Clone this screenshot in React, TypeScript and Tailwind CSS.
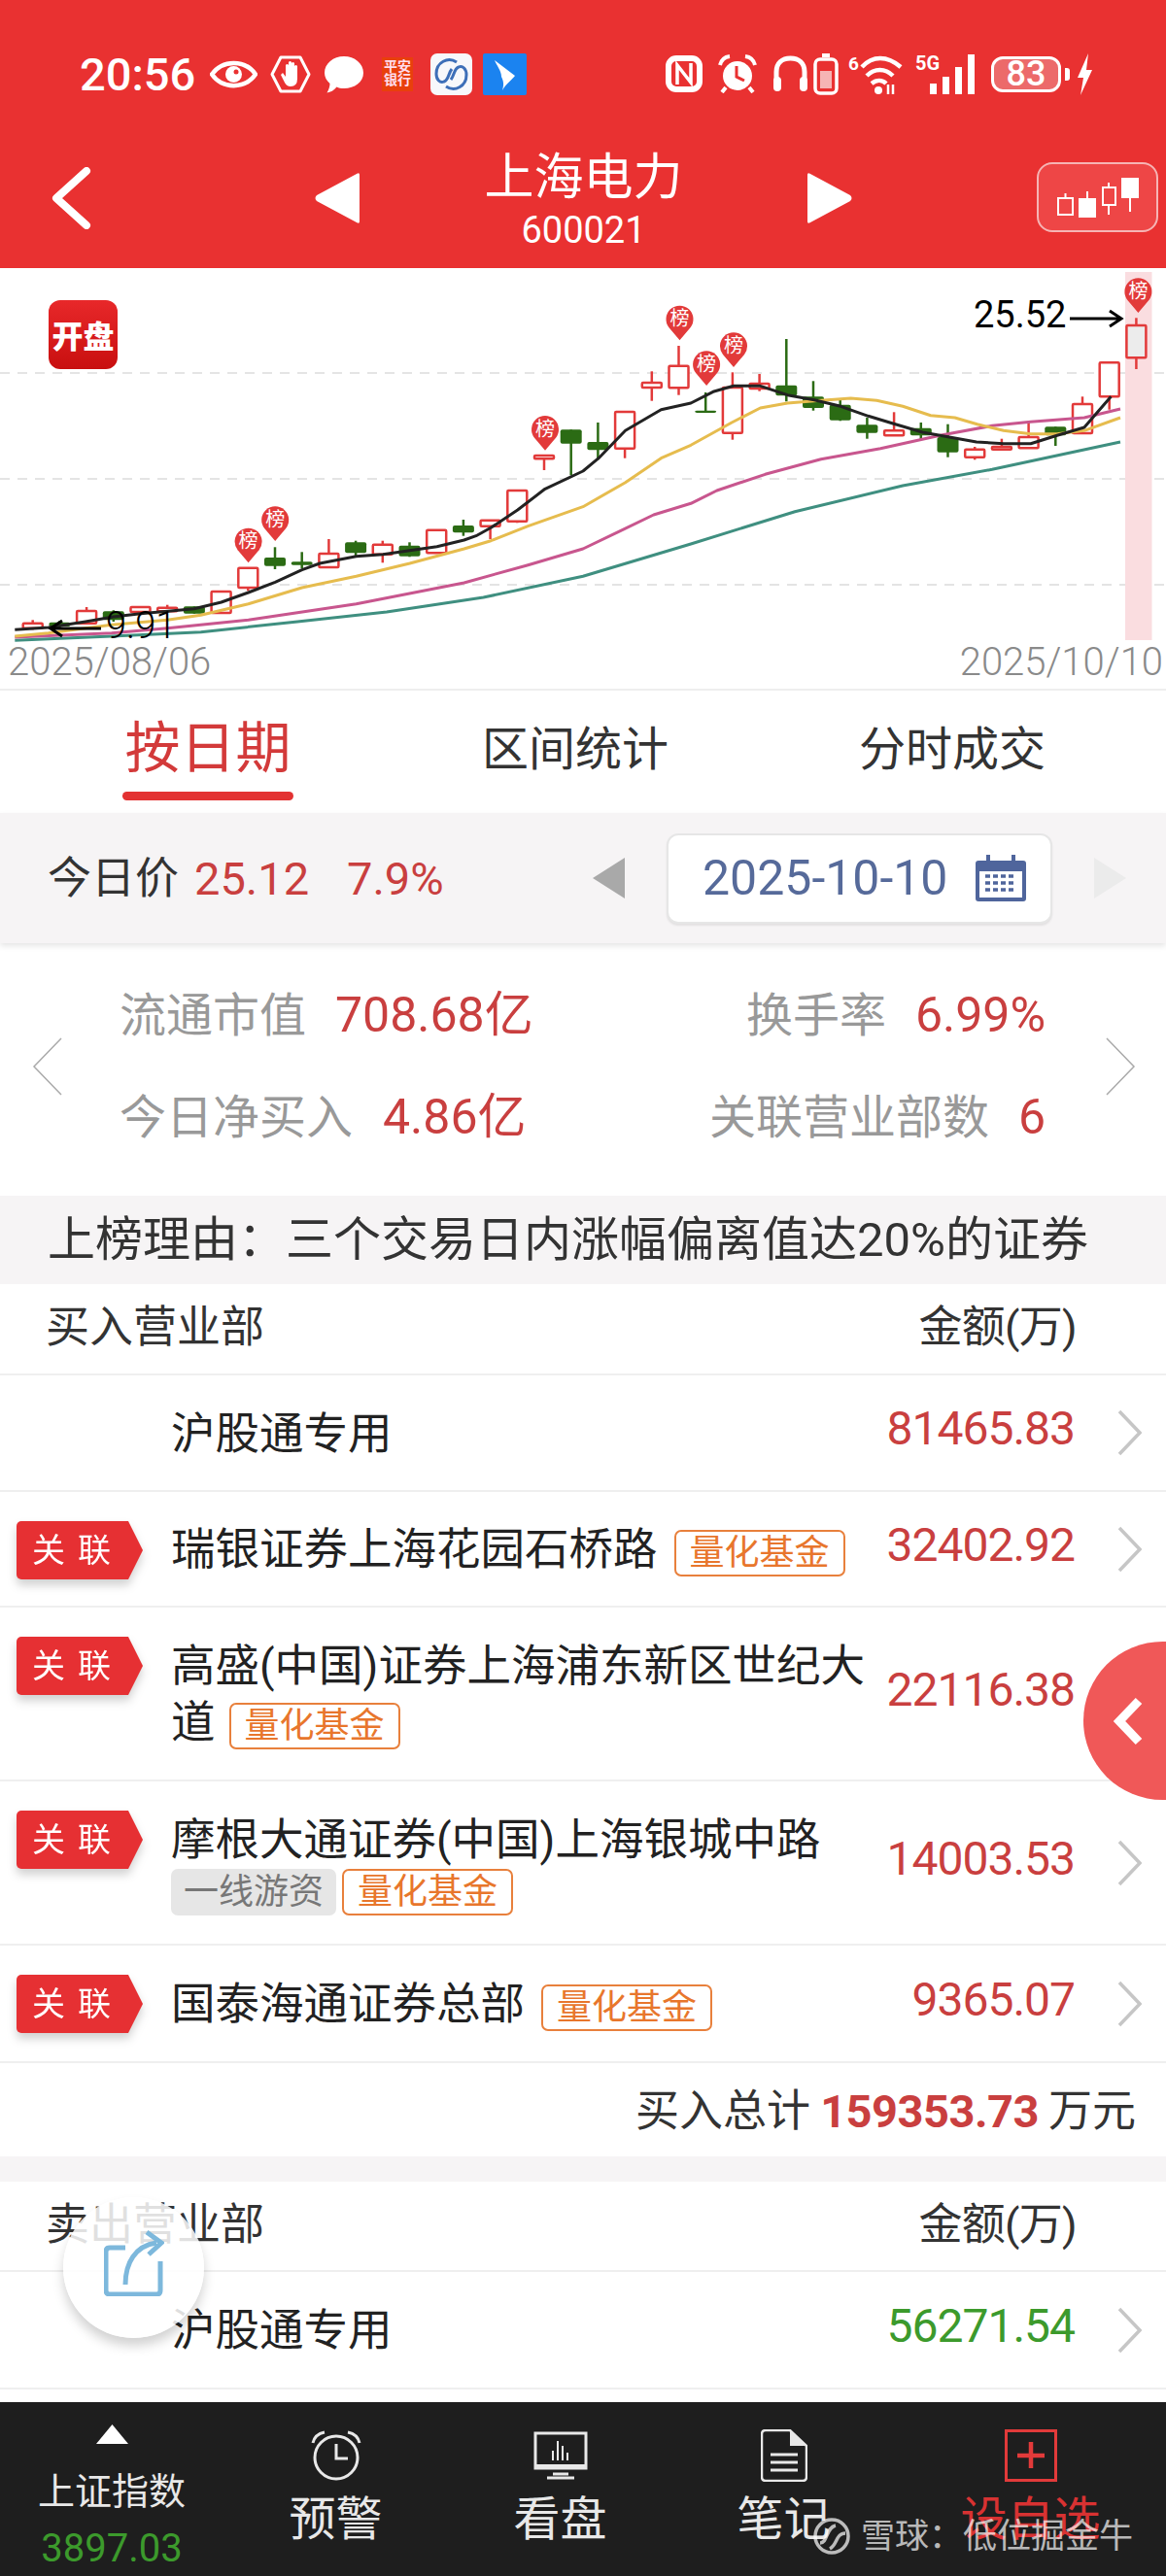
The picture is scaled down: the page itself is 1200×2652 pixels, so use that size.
import React from "react";

const X2 = (x: number) => +(x / 2.613).toFixed(1);
const X3 = (x: number) => +(600 + x / 2.613).toFixed(1);
const Y = (y: number) => +(280 + y / 3).toFixed(1);
const line = (a: number[][], b: number[][]) =>
  [...a.map(([x, y]) => `${X2(x)},${Y(y)}`), ...b.map(([x, y]) => `${X3(x)},${Y(y)}`)].join(" ");

const candles: [number, number, number, number, number][] = [
  [1, 1075, 1085, 1100, 1105], [0, 1078, 1082, 1095, 1100], [1, 1035, 1047, 1085, 1088], [0, 1045, 1048, 1075, 1080],
  [1, 1033, 1035, 1050, 1060], [1, 1028, 1037, 1048, 1052], [0, 1033, 1033, 1055, 1055], [1, 985, 987, 1053, 1055],
  [1, 912, 914, 975, 985], [0, 850, 882, 908, 918], [0, 865, 895, 905, 915], [1, 825, 870, 912, 915],
  [0, 830, 835, 868, 880], [1, 830, 842, 872, 898], [0, 835, 845, 878, 880], [1, 795, 797, 868, 870],
  [0, 765, 783, 805, 815], [1, 765, 767, 785, 825], [1, 675, 675, 770, 775], [1, 567, 567, 577, 612],
  [0, 487, 487, 530, 628], [0, 465, 525, 550, 580], [1, 430, 432, 545, 575], [1, 307, 342, 357, 398],
  [1, 228, 290, 358, 380], [0, 372, 428, 435, 435], [1, 310, 357, 497, 518], [1, 315, 345, 360, 368],
  [0, 207, 350, 382, 400], [0, 337, 385, 420, 428], [0, 395, 410, 458, 460], [0, 450, 472, 497, 515],
  [1, 433, 490, 505, 505], [0, 465, 482, 505, 518], [0, 470, 510, 557, 572], [1, 540, 548, 572, 580],
  [1, 515, 540, 548, 548], [1, 462, 510, 544, 545], [0, 478, 478, 505, 537], [1, 385, 408, 498, 498],
  [1, 280, 280, 385, 425], [1, 142, 165, 265, 300],
];

const ma5 = line(
  [[40,1105],[130,1098],[230,1080],[305,1065],[378,1055],[451,1048],[522,1040],[595,1020],[668,990],[740,958],[812,920],[860,900],[958,878],[1030,872],[1102,860],[1175,848],[1248,828],[1280,815],[1320,790],[1392,735],[1466,670]],
  [[0,615],[42,575],[114,490],[210,425],[290,405],[350,370],[405,352],[477,352],[550,380],[622,395],[693,415],[767,445],[840,470],[913,495],[985,510],[1058,525],[1131,530],[1204,530],[1275,505],[1348,480],[1420,385]]
);
const ma10 = line(
  [[40,1125],[130,1115],[300,1090],[450,1075],[540,1060],[668,1025],[812,975],[958,940],[1102,900],[1248,855],[1320,830],[1420,785]],
  [[0,725],[114,650],[210,575],[290,535],[400,465],[477,420],[550,405],[622,398],[720,390],[790,397],[860,415],[935,443],[1000,450],[1060,470],[1131,490],[1204,500],[1275,500],[1348,490],[1445,450]]
);
const ma20 = line(
  [[40,1128],[300,1115],[450,1100],[668,1075],[958,1025],[1248,960],[1420,905]],
  [[0,855],[100,800],[190,750],[290,715],[360,675],[490,625],[640,578],[800,545],[960,505],[1100,475],[1204,463],[1348,450],[1445,423]]
);
const ma30 = line(
  [[40,1138],[300,1125],[540,1112],[800,1080],[1040,1050],[1300,1005]],
  [[0,940],[290,840],[570,740],[860,660],[1100,610],[1445,525]]
);

const pins = [
  [X2(668), Y(832)], [X2(740), Y(765)], [X2(1466), Y(485)],
  [X3(260), Y(145)], [X3(332), Y(285)], [X3(405), Y(228)], [X3(1493), Y(60)],
];

function Chart() {
  return (
    <svg width="1200" height="433" viewBox="0 276 1200 433" className="block">
      <defs>
        <linearGradient id="kp" x1="0" y1="0" x2="0" y2="1">
          <stop offset="0" stopColor="#e8282a" />
          <stop offset="1" stopColor="#c80f0f" />
        </linearGradient>
      </defs>
      {[384, 493, 602].map((y) => (
        <line key={y} x1="0" x2="1200" y1={y} y2={y} stroke="#dcdcdc" strokeWidth="1.5" strokeDasharray="10 8" />
      ))}
      <rect x="1158" y="280" width="27.5" height="379" fill="#fadde0" />
      <rect x="50" y="309" width="71" height="71" rx="12" fill="url(#kp)" />
      <text x="85.5" y="358" textAnchor="middle" fill="#fff" fontSize="32" fontWeight="900">开盘</text>
      {candles.map(([up, wt, bt, bb, wb], i) => {
        const x = 33.7 + 27.7 * i;
        const c = up ? "#e23a3a" : "#2b6b14";
        return (
          <g key={i}>
            <line x1={x} x2={x} y1={Y(wt)} y2={Y(wb)} stroke={c} strokeWidth="2.5" />
            {up ? (
              <rect x={x - 10} y={Y(bt)} width="20" height={Y(bb) - Y(bt)} fill={i === 41 ? "#ececec" : "#fff"} stroke={c} strokeWidth="2.5" rx="1" />
            ) : (
              <rect x={x - 11} y={Y(bt)} width="22" height={Math.max(Y(bb) - Y(bt), 2)} fill={c} rx="2" />
            )}
          </g>
        );
      })}
      <polyline points={ma30} fill="none" stroke="#3f8f80" strokeWidth="3" strokeLinejoin="round" />
      <polyline points={ma20} fill="none" stroke="#c8568e" strokeWidth="3" strokeLinejoin="round" />
      <polyline points={ma10} fill="none" stroke="#e6bc4e" strokeWidth="3" strokeLinejoin="round" />
      <polyline points={ma5} fill="none" stroke="#222" strokeWidth="3" strokeLinejoin="round" />
      {pins.map(([x, y], i) => (
        <g key={i}>
          <path d={`M${x} ${y + 22}L${x - 11} ${y + 9}A14 14 0 1 1 ${x + 11} ${y + 9}Z`} fill="#e23a3a" />
          <text x={x} y={y + 7} textAnchor="middle" fill="#fff" fontSize="20">榜</text>
        </g>
      ))}
      <text x="1002" y="337" fontSize="38" fill="#000">25.52</text>
      <path d="M1101 328H1153M1142 320L1154 328L1142 336" fill="none" stroke="#000" strokeWidth="3" />
      <text x="109" y="657" fontSize="38" fill="#000" fontWeight="300">9.91</text>
      <path d="M104 647H53M64 639L52 647L64 655" fill="none" stroke="#000" strokeWidth="3" />
      <text x="8" y="695" fontSize="40" fill="#8a8a8a" fontWeight="300">2025/08/06</text>
      <text x="1197" y="695" textAnchor="end" fontSize="40" fill="#8a8a8a" fontWeight="300">2025/10/10</text>
    </svg>
  );
}

function StatusBar() {
  return (
    <div className="flex h-[150px] items-center pl-[82px] pt-[2px] text-white">
      <span className="w-[134px] text-[47px] font-medium leading-none">20:56</span>
      <svg width="49" height="29" viewBox="0 0 49 29" className="mr-[13px]">
        <path d="M2 14.5C13 -1 36 -1 47 14.5C36 30 13 30 2 14.5Z" fill="none" stroke="#fff" strokeWidth="4.5" />
        <circle cx="24.5" cy="14.5" r="8.5" fill="#fff" />
        <circle cx="27" cy="12" r="2.5" fill="#e93131" />
      </svg>
      <svg width="42" height="39" viewBox="0 0 42 39" className="mr-[13px]">
        <path d="M11 2H31L40 19.5L31 37H11L2 19.5Z" fill="none" stroke="#fff" strokeWidth="3" strokeLinejoin="round" />
        <path d="M11 20L13 18L16 22V10Q17.5 8 19 10V19V7Q20.5 5 22 7V19V8Q23.5 6 25 8V20V11Q26.5 9 28 11V24Q28 32 21 32Q17 32 15 28Z" fill="#fff" />
      </svg>
      <svg width="42" height="39" viewBox="0 0 42 39" className="mr-[18px]">
        <path d="M21 1C32 1 41 8.5 41 18C41 27.5 32 34 21 34C18 34 15.5 33.5 13.5 32.5C11 36 7 38 3.5 38.5C5.5 35 6.5 32 6.5 29C3 26 1 22 1 18C1 8.5 10 1 21 1Z" fill="#fff" />
      </svg>
      <div className="mr-[18px] flex h-[35px] w-[32px] flex-col items-center justify-start bg-[#e8400c] pt-[2px] text-[14px] font-bold leading-[14px] text-[#fde]">
        <span>平安</span>
        <span>银行</span>
      </div>
      <svg width="43" height="43" viewBox="0 0 43 43" className="mr-[11px]">
        <rect width="43" height="43" rx="7" fill="#f7f8fb" />
        <path d="M27 9C18 3 6 9 6 21C6 27 10 31 14 29C19 27 18 21 22 16" fill="none" stroke="#3d6fb8" strokeWidth="3" />
        <path d="M16 34C25 40 37 34 37 22C37 16 33 12 29 14C24 16 25 22 21 27" fill="none" stroke="#3d6fb8" strokeWidth="3" />
      </svg>
      <svg width="45" height="43" viewBox="0 0 45 43" className="mr-[143px]">
        <rect width="45" height="43" rx="2" fill="#1b83f0" />
        <path d="M12 7L33 23C30 27 24 31 20 38C22 32 21 28 19 24C19 18 14 12 12 7Z" fill="#fff" />
      </svg>
      <svg width="38" height="38" viewBox="0 0 38 38" className="mr-[15px]">
        <rect x="3" y="3" width="32" height="32" rx="8" fill="none" stroke="#fff" strokeWidth="6" />
        <path d="M12 30V10L26 28V8" fill="none" stroke="#fff" strokeWidth="3.5" />
      </svg>
      <svg width="42" height="40" viewBox="0 0 42 40" className="mr-[15px]">
        <circle cx="21" cy="22" r="15" fill="#fff" />
        <path d="M20 12V23L28 27" fill="none" stroke="#e93131" strokeWidth="3" />
        <path d="M3 11Q5 3 13 2M39 11Q37 3 29 2M9 34L5 39M33 34L37 39" fill="none" stroke="#fff" strokeWidth="4" />
      </svg>
      <svg width="37" height="38" viewBox="0 0 37 38" className="mr-[5px]">
        <path d="M4 26V17C4 8 10 3 18.5 3C27 3 33 8 33 17V26" fill="none" stroke="#fff" strokeWidth="5" />
        <rect x="1" y="22" width="8" height="15" rx="4" fill="#fff" />
        <rect x="28" y="22" width="8" height="15" rx="4" fill="#fff" />
      </svg>
      <svg width="26" height="43" viewBox="0 0 26 43" className="mr-[10px]">
        <path d="M9 0H17V4H9Z" fill="#fff" />
        <rect x="2" y="6" width="22" height="35" rx="5" fill="none" stroke="#fff" strokeWidth="3.5" />
        <rect x="7" y="18" width="12" height="18" fill="#f6b4b4" />
      </svg>
      <svg width="56" height="43" viewBox="0 0 56 43" className="mr-[13px]">
        <text x="0" y="17" fontSize="19" fontWeight="700" fill="#fff">6</text>
        <path d="M14 14C25 2 40 2 54 14M19 23C27 15 38 15 46 23M24 31C29 27 35 27 39 31" fill="none" stroke="#fff" strokeWidth="4.5" />
        <circle cx="31" cy="38" r="4" fill="#fff" />
        <path d="M41 32V42M46 32V42" stroke="#fff" strokeWidth="2.5" />
      </svg>
      <svg width="61" height="43" viewBox="0 0 61 43" className="mr-[17px]">
        <text x="0" y="17" fontSize="20" fontWeight="700" fill="#fff">5G</text>
        <rect x="15" y="31" width="7" height="11" fill="#fff" />
        <rect x="28" y="24" width="7" height="18" fill="#fff" />
        <rect x="41" y="14" width="7" height="28" fill="#fff" />
        <rect x="54" y="1" width="7" height="41" fill="#fff" />
      </svg>
      <div className="flex w-[72px] items-center">
        <div className="flex h-[37px] w-full items-center justify-center rounded-[12px] border-[3px] border-white bg-[#ec6a6a] text-[36px] font-medium leading-none text-white">83</div>
      </div>
      <div className="ml-[4px] h-[13px] w-[5px] rounded-r-[3px] bg-white" />
      <svg width="17" height="43" viewBox="0 0 17 43" className="ml-[7px]">
        <path d="M12 0L1 25H7L4 43L16 17H10Z" fill="#fff" />
      </svg>
    </div>
  );
}

function NavBar() {
  return (
    <div className="flex h-[126px] items-start pl-[52px] text-white">
      <svg width="42" height="64" viewBox="0 0 42 64" className="mt-[22px] mr-[229px]">
        <path d="M37 4L6 32L37 60" fill="none" stroke="#fff" strokeWidth="8" strokeLinecap="round" strokeLinejoin="round" />
      </svg>
      <svg width="48" height="54" viewBox="0 0 48 54" className="mt-[27px]">
        <path d="M47 3V51Q47 54 44 52L3 30Q0 27 3 24L44 2Q47 0 47 3Z" fill="#fff" />
      </svg>
      <div className="flex w-[459px] flex-col items-center">
        <span className="mt-[3px] text-[51px] leading-[60px]">上海电力</span>
        <span className="text-[38px] leading-[48px]">600021</span>
      </div>
      <svg width="48" height="54" viewBox="0 0 48 54" className="mt-[27px]">
        <path d="M1 3V51Q1 54 4 52L45 30Q48 27 45 24L4 2Q1 0 1 3Z" fill="#fff" />
      </svg>
      <div className="ml-[189px] mt-[17px] flex h-[72px] w-[125px] items-center justify-center rounded-[16px] border-2 border-[#f6b4b4] bg-[#ee4646]">
        <svg width="84" height="46" viewBox="0 0 84 46" className="mt-[-3px]">
          <path d="M8.5 20V25M31 18V25M53 9V42M75 4V39" stroke="#fff" strokeWidth="2" />
          <rect x="1" y="25" width="15" height="17" fill="#ee4646" stroke="#fff" strokeWidth="2" />
          <rect x="22" y="25" width="18" height="20" fill="#fff" />
          <rect x="47" y="14" width="13" height="18" fill="#ee4646" stroke="#fff" strokeWidth="2" />
          <rect x="66" y="4" width="18" height="21" fill="#fff" />
        </svg>
      </div>
    </div>
  );
}

function Tabs() {
  return (
    <div className="flex h-[128px] items-start border-t-2 border-[#eeeeee] pl-[126px]">
      <div className="flex w-[176px] flex-col items-center pt-[22px]">
        <span className="text-[57px] leading-[76px] text-[#d33a3a]">按日期</span>
        <div className="mt-[6px] h-[9px] w-full rounded-full bg-[#e33232]" />
      </div>
      <span className="ml-[194px] mt-[31px] text-[48px] leading-[60px] text-[#333]">区间统计</span>
      <span className="ml-[196px] mt-[31px] text-[48px] leading-[60px] text-[#333]">分时成交</span>
    </div>
  );
}

function DateBar() {
  return (
    <div className="relative z-10 flex h-[134px] items-center bg-[#f6f4f5] pl-[49px] shadow-[0_3px_6px_rgba(0,0,0,0.1)]">
      <span className="w-[151px] text-[45px] leading-none text-[#333]">今日价</span>
      <span className="w-[157px] text-[47px] leading-none text-[#c93f3f]">25.12</span>
      <span className="w-[253px] text-[47px] leading-none text-[#c93f3f]">7.9%</span>
      <svg width="33" height="42" viewBox="0 0 33 42">
        <path d="M33 0V42L0 21Z" fill="#a9a9a9" />
      </svg>
      <div className="ml-[43px] flex h-[93px] w-[397px] items-center rounded-[12px] border-2 border-[#e6e6e6] bg-white pl-[35px] shadow-[0_2px_2px_rgba(0,0,0,0.08)]">
        <span className="w-[281px] text-[50px] leading-none text-[#566a9a]">2025-10-10</span>
        <svg width="52" height="48" viewBox="0 0 52 48">
          <path d="M3 6H49Q52 6 52 9V45Q52 48 49 48H3Q0 48 0 45V9Q0 6 3 6Z" fill="#4f659c" />
          <rect x="4" y="17" width="44" height="27" fill="#fff" />
          <path d="M13 0V12M39 0V12" stroke="#4f659c" strokeWidth="4" />
          <path d="M10 22H42M10 29H42M10 36H42" stroke="#4f659c" strokeWidth="3.5" strokeDasharray="5 3" />
        </svg>
      </div>
      <svg width="33" height="42" viewBox="0 0 33 42" className="ml-[43px]">
        <path d="M0 0V42L33 21Z" fill="#ebebeb" />
      </svg>
    </div>
  );
}

function Stats() {
  const v = "text-[50px] text-[#c93f3f]";
  return (
    <div className="flex h-[260px] items-center pl-[33px] pr-[31px] pb-[6px]">
      <svg width="31" height="60" viewBox="0 0 31 60" className="shrink-0">
        <path d="M30 1L2 30L30 59" fill="none" stroke="#aaa" strokeWidth="1.5" />
      </svg>
      <div className="flex flex-1 flex-col gap-[44px] pl-[59px] pr-[62px] text-[48px] leading-[60px]">
        <div className="flex justify-between">
          <div>
            <span className="text-[#999]">流通市值</span>
            <span className={`ml-[30px] ${v}`}>708.68亿</span>
          </div>
          <div>
            <span className="text-[#999]">换手率</span>
            <span className={`ml-[30px] ${v}`}>6.99%</span>
          </div>
        </div>
        <div className="flex justify-between">
          <div>
            <span className="text-[#999]">今日净买入</span>
            <span className={`ml-[31px] ${v}`}>4.86亿</span>
          </div>
          <div>
            <span className="text-[#999]">关联营业部数</span>
            <span className={`ml-[30px] ${v}`}>6</span>
          </div>
        </div>
      </div>
      <svg width="31" height="60" viewBox="0 0 31 60" className="shrink-0">
        <path d="M1 1L29 30L1 59" fill="none" stroke="#aaa" strokeWidth="1.5" />
      </svg>
    </div>
  );
}

function Tag() {
  return (
    <div className="ml-[17px] mt-[30px] h-[60px] w-[130px] shrink-0 self-start drop-shadow-[0_6px_5px_rgba(0,0,0,0.18)]">
      <div className="flex h-full items-center rounded-l-[5px] bg-[#e63033] pl-[16px] text-[34px] leading-none tracking-[13px] text-white [clip-path:polygon(0_0,115px_0,130px_50%,115px_100%,0_100%)]">
        关联
      </div>
    </div>
  );
}

function Quant({ className = "" }: { className?: string }) {
  return (
    <span className={`inline-flex h-[48px] w-[176px] items-center justify-center rounded-[7px] border-2 border-[#e8803c] align-middle text-[36px] leading-none text-[#e8762c] ${className}`}>
      量化基金
    </span>
  );
}

function Row({
  h,
  tag,
  amount,
  green,
  children,
}: {
  h: string;
  tag?: boolean;
  amount: string;
  green?: boolean;
  children: React.ReactNode;
}) {
  return (
    <div className={`flex items-center border-b-2 border-[#efefef] pr-[25px] ${h}`}>
      {tag ? <Tag /> : <div className="w-[147px] shrink-0" />}
      <div className="ml-[29px] mt-[3px] w-[724px] shrink-0 text-[45.5px] leading-[58px] text-[#222]">{children}</div>
      <span className={`mb-[8px] flex-1 text-right text-[48px] leading-none tracking-[-1px] ${green ? "text-[#3c9a2c]" : "text-[#c93f3f]"}`}>
        {amount}
      </span>
      <svg width="25" height="48" viewBox="0 0 25 48" className="ml-[44px] shrink-0">
        <path d="M2 2L23 24L2 46" fill="none" stroke="#c6c6c6" strokeWidth="3.5" />
      </svg>
    </div>
  );
}

function Header({ title, h }: { title: string; h: string }) {
  return (
    <div className={`flex items-center justify-between border-b-2 border-[#efefef] pl-[47px] pr-[92px] pb-[3px] text-[45px] leading-none text-[#333] ${h}`}>
      <span>{title}</span>
      <span className="tracking-[-0.7px]">金额(万)</span>
    </div>
  );
}

function BottomNav() {
  const label = "mt-[9px] text-[48px] leading-[60px] text-[#e8e8e8]";
  return (
    <div className="flex h-[179px] bg-[#1e1e1e]">
      <div className="flex w-[230px] flex-col items-center pt-[23px]">
        <svg width="33" height="20" viewBox="0 0 33 20">
          <path d="M16.5 0L33 20H0Z" fill="#fff" />
        </svg>
        <span className="mt-[25px] text-[38px] leading-[48px] text-[#e8e8e8]">上证指数</span>
        <span className="mt-[11px] text-[40px] leading-[48px] text-[#3c9a2c]">3897.03</span>
      </div>
      <div className="flex w-[231px] flex-col items-center pt-[28px]">
        <svg width="54" height="54" viewBox="0 0 54 54">
          <circle cx="27" cy="29" r="22" fill="none" stroke="#e8e8e8" strokeWidth="3" />
          <path d="M27 15V30H39" fill="none" stroke="#e8e8e8" strokeWidth="3" />
          <path d="M3 14Q5 5 15 3M51 14Q49 5 39 3" fill="none" stroke="#e8e8e8" strokeWidth="3" />
        </svg>
        <span className={label}>预警</span>
      </div>
      <div className="flex w-[231px] flex-col items-center pt-[28px]">
        <svg width="56" height="54" viewBox="0 0 56 54">
          <rect x="2" y="4" width="52" height="36" fill="none" stroke="#e8e8e8" strokeWidth="3" />
          <rect x="2" y="36" width="52" height="5" fill="#e8e8e8" />
          <path d="M20 46H36M14 50H42" stroke="#e8e8e8" strokeWidth="3" />
          <path d="M20 32V22M25 32V12M30 32V17M35 32V24" stroke="#e8e8e8" strokeWidth="2" />
        </svg>
        <span className={label}>看盘</span>
      </div>
      <div className="flex w-[229px] flex-col items-center pt-[28px]">
        <svg width="48" height="54" viewBox="0 0 48 54">
          <path d="M5 1H30L47 17V49Q47 53 43 53H5Q1 53 1 49V5Q1 1 5 1Z" fill="none" stroke="#e8e8e8" strokeWidth="2.5" />
          <path d="M30 1V17H47Z" fill="#e8e8e8" />
          <path d="M10 26H38M10 34H38M10 42H38" stroke="#e8e8e8" strokeWidth="3" />
        </svg>
        <span className={label}>笔记</span>
      </div>
      <div className="flex w-[279px] flex-col items-center pt-[28px]">
        <svg width="54" height="54" viewBox="0 0 54 54">
          <rect x="1.5" y="1.5" width="51" height="51" fill="none" stroke="#e23a3a" strokeWidth="3" />
          <path d="M27 13V40M13 27H41" stroke="#e23a3a" strokeWidth="4.5" />
        </svg>
        <span className="mt-[9px] text-[48px] leading-[60px] text-[#d83232]">设自选</span>
      </div>
    </div>
  );
}

export default function App() {
  return (
    <div className="relative h-[2652px] w-[1200px] overflow-hidden bg-white font-[Roboto,'Noto_Sans_CJK_SC',sans-serif]">
      <div className="h-[276px] bg-[#e93131]">
        <StatusBar />
        <NavBar />
      </div>
      <Chart />
      <Tabs />
      <DateBar />
      <Stats />
      <div className="flex h-[91px] items-center bg-[#f6f4f5] pl-[49px] text-[49px] leading-none text-[#333]">
        上榜理由：三个交易日内涨幅偏离值达20%的证券
      </div>
      <Header title="买入营业部" h="h-[94px]" />
      <Row h="h-[120px]" amount="81465.83">沪股通专用</Row>
      <Row h="h-[119px]" tag amount="32402.92">
        瑞银证券上海花园石桥路<Quant className="ml-[17px]" />
      </Row>
      <Row h="h-[179px]" tag amount="22116.38">
        高盛(中国)证券上海浦东新区世纪大道<Quant className="ml-[14px]" />
      </Row>
      <Row h="h-[169px]" tag amount="14003.53">
        摩根大通证券(中国)上海银城中路
        <div className="flex h-[48px] items-center">
          <span className="flex h-[48px] w-[170px] items-center justify-center rounded-[7px] bg-[#e6e6e6] text-[36px] leading-none text-[#777]">一线游资</span>
          <Quant className="ml-[6px]" />
        </div>
      </Row>
      <Row h="h-[121px]" tag amount="9365.07">
        国泰海通证券总部<Quant className="ml-[17px]" />
      </Row>
      <div className="flex h-[96px] items-center justify-end pr-[31px] pt-[3px] text-[45px] leading-none text-[#333]">
        买入总计<span className="mx-[10px] text-[47px] font-bold tracking-[-0.5px] text-[#c93f3f]">159353.73</span>万元
      </div>
      <div className="h-[26px] bg-[#f6f4f5]" />
      <Header title="卖出营业部" h="h-[93px]" />
      <Row h="h-[121px]" amount="56271.54" green>沪股通专用</Row>
      <div className="h-[13px]" />
      <BottomNav />

      <div className="absolute left-[1115px] top-[1690px] flex h-[163px] w-[163px] items-center rounded-full bg-[#f05858] pl-[30px]">
        <svg width="32" height="52" viewBox="0 0 32 52">
          <path d="M27 5L7 26L27 47" fill="none" stroke="#fff" strokeWidth="9" />
        </svg>
      </div>

      <div className="absolute left-[65px] top-[2262px] flex h-[145px] w-[145px] items-center justify-center rounded-full bg-white/85 shadow-[0_8px_12px_rgba(0,0,0,0.18)]">
        <svg width="62" height="68" viewBox="0 0 62 68" className="mb-[10px]">
          <path d="M22 18H6Q2 18 2 22V62Q2 66 6 66H54Q58 66 58 62V32" fill="none" stroke="#7db8dc" strokeWidth="5" />
          <path d="M22 56C22 34 32 16 54 13" fill="none" stroke="#7db8dc" strokeWidth="5" />
          <path d="M44 2L59 13L46 25" fill="none" stroke="#7db8dc" strokeWidth="5" />
        </svg>
      </div>

      <div className="absolute left-[836px] top-[2590px] flex items-center text-white/70">
        <svg width="40" height="42" viewBox="0 0 40 42">
          <circle cx="20" cy="21" r="17" fill="none" stroke="#fff" strokeOpacity="0.7" strokeWidth="3.5" />
          <path d="M8 28C16 28 14 12 24 10M18 34C26 30 24 18 34 18" fill="none" stroke="#fff" strokeOpacity="0.7" strokeWidth="3.5" />
        </svg>
        <span className="ml-[10px] text-[35px] leading-none">雪球：低位掘金牛</span>
      </div>
    </div>
  );
}
